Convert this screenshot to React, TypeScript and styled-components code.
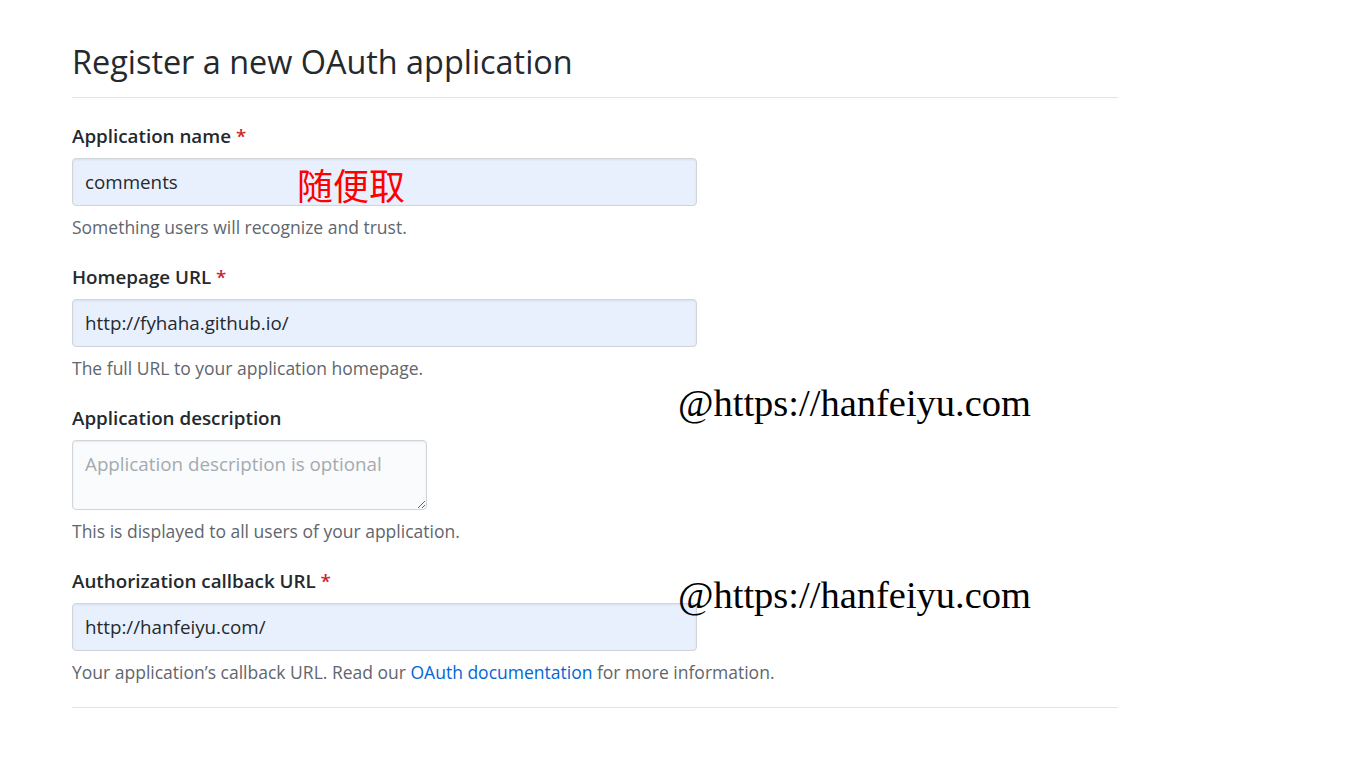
import * as React from 'react';
import styled, { createGlobalStyle } from 'styled-components';

const GlobalStyle = createGlobalStyle`
    body {
        margin: 0;
        background: #fff;
        font-family: "Open Sans", "Noto Sans", sans-serif;
        color: #24292e;
    }
`;

const Page = styled.div`
    position: relative;
    width: 1354px;
    height: 764px;
    overflow: hidden;
`;

const Content = styled.div`
    width: 1046px;
    margin-left: 72px;
    padding-top: 41px;
`;

const Heading = styled.h1`
    margin: 0 0 24px;
    padding-bottom: 16px;
    font-size: 32.4px;
    line-height: 40px;
    font-weight: 400;
    border-bottom: 1px solid #e1e4e8;
`;

const Group = styled.div<{ $last?: boolean }>`
    margin-bottom: ${(p) => (p.$last ? 0 : 23)}px;
`;

const Label = styled.label`
    display: block;
    font-size: 18.8px;
    line-height: 28px;
    font-weight: 600;
    margin-bottom: 8px;
`;

const Required = styled.span`
    color: #cb2431;
`;

const TextInput = styled.input`
    display: block;
    box-sizing: border-box;
    width: 625px;
    height: 48px;
    padding: 0 12px;
    font-family: inherit;
    font-size: 18.8px;
    color: #24292e;
    background: #e8f0fe;
    border: 1px solid #d1d5da;
    border-radius: 4px;
    box-shadow: inset 0 1px 2px rgba(27, 31, 35, 0.075);
    outline: none;
`;

const TextArea = styled.textarea`
    display: block;
    box-sizing: border-box;
    width: 355px;
    height: 70px;
    padding: 10px 12px;
    font-family: inherit;
    font-size: 18.8px;
    line-height: 26px;
    color: #24292e;
    background: #fafbfc;
    border: 1px solid #d1d5da;
    border-radius: 4px;
    box-shadow: inset 0 1px 2px rgba(27, 31, 35, 0.075);
    outline: none;

    &::placeholder {
        color: #a3aab1;
    }
`;

const Note = styled.p`
    margin: 8px 0 0;
    font-size: 17.5px;
    line-height: 26px;
    color: #5f666d;
`;

const Link = styled.a`
    color: #0366d6;
    text-decoration: none;
`;

const Rule = styled.hr`
    margin: 22px 0 0;
    border: 0;
    border-top: 1px solid #e1e4e8;
`;

const Watermark = styled.div<{ $top: number }>`
    position: absolute;
    left: 678px;
    top: ${(p) => p.$top}px;
    font-family: "Liberation Serif", serif;
    font-size: 38.5px;
    color: #000;
    white-space: nowrap;
`;

const Annotation = styled.div`
    position: absolute;
    left: 297px;
    top: 166px;
    font-family: "Noto Sans CJK SC", sans-serif;
    font-size: 36px;
    line-height: 1;
    color: #ff0000;
`;

export default function App() {
    return (
        <Page>
            <GlobalStyle />
            <Content>
                <Heading>Register a new OAuth application</Heading>

                <Group>
                    <Label>Application name <Required>*</Required></Label>
                    <TextInput readOnly value="comments" />
                    <Note>Something users will recognize and trust.</Note>
                </Group>

                <Group>
                    <Label>Homepage URL <Required>*</Required></Label>
                    <TextInput readOnly value="http://fyhaha.github.io/" />
                    <Note>The full URL to your application homepage.</Note>
                </Group>

                <Group>
                    <Label>Application description</Label>
                    <TextArea readOnly placeholder="Application description is optional" />
                    <Note>This is displayed to all users of your application.</Note>
                </Group>

                <Group $last>
                    <Label>Authorization callback URL <Required>*</Required></Label>
                    <TextInput readOnly value="http://hanfeiyu.com/" />
                    <Note>
                        Your application’s callback URL. Read our <Link href="#">OAuth documentation</Link> for more information.
                    </Note>
                </Group>

                <Rule />
            </Content>

            <Annotation>随便取</Annotation>
            <Watermark $top={381}>@https://hanfeiyu.com</Watermark>
            <Watermark $top={573}>@https://hanfeiyu.com</Watermark>
        </Page>
    );
}
